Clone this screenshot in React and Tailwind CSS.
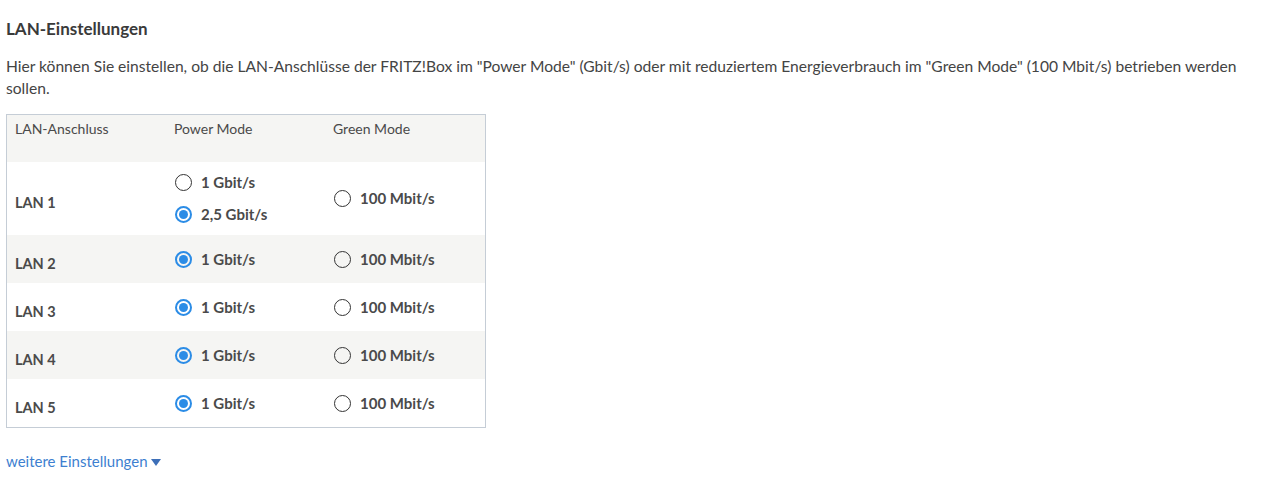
import React from 'react';

const rows = [
  { name: 'LAN 1', power: ['1 Gbit/s', '2,5 Gbit/s'], selected: 1 },
  { name: 'LAN 2', power: ['1 Gbit/s'], selected: 0 },
  { name: 'LAN 3', power: ['1 Gbit/s'], selected: 0 },
  { name: 'LAN 4', power: ['1 Gbit/s'], selected: 0 },
  { name: 'LAN 5', power: ['1 Gbit/s'], selected: 0 },
];

const Radio = ({ checked, label }) => (
  <label className="flex items-center gap-[9px] h-[20px]">
    <span
      className={
        checked
          ? 'w-[17px] h-[17px] rounded-full border-2 border-[#2b8ce6] flex items-center justify-center shrink-0'
          : 'w-[17px] h-[17px] rounded-full border-[1.5px] border-[#333] shrink-0'
      }
    >
      {checked && <span className="w-[9px] h-[9px] rounded-full bg-[#2b8ce6]" />}
    </span>
    <span className="text-[15px] font-bold text-[#4a4a4a]">{label}</span>
  </label>
);

export default function App() {
  return (
    <div className="pl-[6px] pt-[19px] bg-white text-[#3b3b3b]" style={{ fontFamily: 'Lato, "Noto Sans", sans-serif' }}>
      <h2 className="text-[17px] leading-[20px] font-bold text-[#3a3a3a]">LAN-Einstellungen</h2>
      <p className="mt-[16px] w-[1240px] text-[15.6px] leading-[22px] text-[#444]">
        Hier können Sie einstellen, ob die LAN-Anschlüsse der FRITZ!Box im "Power Mode" (Gbit/s) oder mit reduziertem Energieverbrauch im "Green Mode" (100 Mbit/s) betrieben werden sollen.
      </p>

      <div className="mt-[15px] w-[480px] border border-[#c5cdd6]">
        <div className="grid grid-cols-[159px_159px_1fr] h-[47px] bg-[#f5f5f3] text-[14px] leading-[18px] text-[#4a4a4a]">
          <div className="pl-[8px] pt-[5px]">LAN-Anschluss</div>
          <div className="pl-[8px] pt-[5px]">Power Mode</div>
          <div className="pl-[8px] pt-[5px]">Green Mode</div>
        </div>
        {rows.map((row, i) => (
          <div
            key={row.name}
            className={
              'grid grid-cols-[159px_159px_1fr] items-center ' +
              (i === 0 ? 'h-[73px] ' : 'h-[48px] ') +
              (i % 2 === 1 ? 'bg-[#f5f5f3]' : 'bg-white')
            }
          >
            <div className="pl-[8px] pt-[9px] text-[14.5px] font-bold text-[#4a4a4a]">{row.name}</div>
            <div className="pl-[9px] flex flex-col gap-[12px]">
              {row.power.map((p, j) => (
                <Radio key={p} label={p} checked={j === row.selected} />
              ))}
            </div>
            <div className="pl-[9px]">
              <Radio label="100 Mbit/s" checked={false} />
            </div>
          </div>
        ))}
      </div>

      <a href="#" className="mt-[23px] flex items-center gap-[3px] text-[15px] leading-[20px] text-[#3d7fd0]">
        weitere Einstellungen
        <svg width="10" height="7" viewBox="0 0 10 7" className="mt-[2px]">
          <path d="M0 0 H10 L5 7 Z" fill="#3d6fb8" />
        </svg>
      </a>
      <div className="h-[12px]" />
    </div>
  );
}
